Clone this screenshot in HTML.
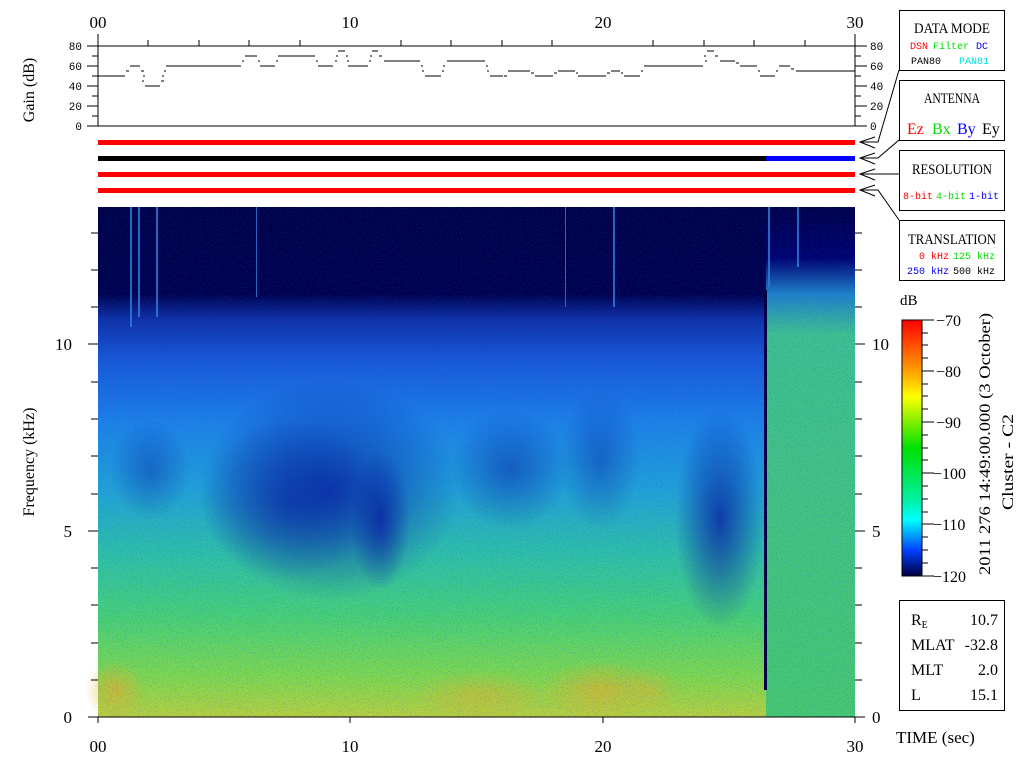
<!DOCTYPE html>
<html><head><style>
body{margin:0;background:#fff;width:1024px;height:768px;overflow:hidden}
svg{display:block}
text{font-family:"Liberation Mono",monospace}
.s{font-family:"Liberation Serif",serif}
</style></head><body>
<svg width="1024" height="768" viewBox="0 0 1024 768" xmlns="http://www.w3.org/2000/svg">
<defs>
<linearGradient id="main" x1="0" y1="207" x2="0" y2="717" gradientUnits="userSpaceOnUse">
<stop offset="0" stop-color="#000048"/>
<stop offset="0.17" stop-color="#00004e"/>
<stop offset="0.22" stop-color="#1030a8"/>
<stop offset="0.3" stop-color="#1a58d8"/>
<stop offset="0.42" stop-color="#1e80e8"/>
<stop offset="0.55" stop-color="#22a0d8"/>
<stop offset="0.68" stop-color="#30c0a8"/>
<stop offset="0.8" stop-color="#48d078"/>
<stop offset="0.92" stop-color="#80d850"/>
<stop offset="1" stop-color="#b8d040"/>
</linearGradient>
<linearGradient id="right" x1="0" y1="207" x2="0" y2="717" gradientUnits="userSpaceOnUse">
<stop offset="0" stop-color="#000048"/>
<stop offset="0.1" stop-color="#000070"/>
<stop offset="0.17" stop-color="#2080c8"/>
<stop offset="0.25" stop-color="#40c090"/>
<stop offset="1" stop-color="#48c870"/>
</linearGradient>
<linearGradient id="cb" x1="0" y1="320" x2="0" y2="576" gradientUnits="userSpaceOnUse">
<stop offset="0" stop-color="#ff0000"/>
<stop offset="0.2" stop-color="#ffa000"/>
<stop offset="0.3" stop-color="#ffff00"/>
<stop offset="0.5" stop-color="#00e000"/>
<stop offset="0.7" stop-color="#00f0a0"/>
<stop offset="0.78" stop-color="#00ffff"/>
<stop offset="0.9" stop-color="#0040ff"/>
<stop offset="1" stop-color="#000040"/>
</linearGradient>
<radialGradient id="dark"><stop offset="0" stop-color="#0820a0" stop-opacity="0.8"/><stop offset="1" stop-color="#0820a0" stop-opacity="0"/></radialGradient>
<radialGradient id="warm"><stop offset="0" stop-color="#e0b030" stop-opacity="0.7"/><stop offset="1" stop-color="#e0b030" stop-opacity="0"/></radialGradient>
<filter id="n" filterUnits="userSpaceOnUse" x="98" y="207" width="757" height="510"><feTurbulence type="fractalNoise" baseFrequency="0.8" numOctaves="1" seed="3"/><feColorMatrix values="0 0 0 0 0  0 0 0 0 0.1  0 0 0 0 0.6  0 0 0 2 -1"/></filter>
</defs>

<g font-size="17" class="s">
<text x="98" y="28" text-anchor="middle" class="s">00</text>
<text x="350" y="28" text-anchor="middle" class="s">10</text>
<text x="603" y="28" text-anchor="middle" class="s">20</text>
<text x="855" y="28" text-anchor="middle" class="s">30</text>
</g>
<g stroke="#000" stroke-width="1" fill="none">
<line x1="98" y1="34" x2="98" y2="126"/><line x1="855" y1="34" x2="855" y2="126"/>
<line x1="87" y1="46" x2="867" y2="46"/><line x1="87" y1="126" x2="867" y2="126"/>
<path d="M148 40V46M199 40V46M249 40V46M300 40V46M401 40V46M451 40V46M502 40V46M552 40V46M653 40V46M704 40V46M754 40V46M805 40V46"/>
<path d="M92 56H98M87 66H98M92 76H98M87 86H98M92 96H98M87 106H98M92 116H98"/>
<path d="M855 56H861M855 66H867M855 76H861M855 86H867M855 96H861M855 106H867M855 116H861"/>
<path d="M98 76H125 M130 66H140 M145 86H160 M166 66H241 M245 56H257 M260 66H275 M278 56H315 M318 66H333 M338 51H345 M348 66H368 M372 51H378 M384 61H420 M425 76H441 M447 61H485 M490 76H503 M508 71H530 M535 76H553 M558 71H575 M578 76H606 M611 71H620 M624 76H640 M644 66H703 M707 51H714 M720 61H735 M740 66H757 M760 76H775 M779 66H790 M796 71H855"/>
<path d="M126 71h3M141 71h3M143 76h2M142 81h2M161 81h3M162 76h2M164 71h2M242 61h2M258 61h2M276 61h2M316 61h2M335 61h2M336 56h2M346 56h2M347 61h2M369 61h2M370 56h2M379 56h3M421 66h2M422 71h2M442 71h2M443 66h2M486 66h2M487 71h2M504 76h3M531 73h3M554 73h3M576 73h2M607 73h3M621 73h2M641 71h2M704 56h2M705 61h2M715 56h3M736 63h3M758 71h2M776 71h2M791 69h3"/>
</g>
<g font-size="11" fill="#000">
<text x="82" y="50" text-anchor="end">80</text><text x="82" y="70" text-anchor="end">60</text><text x="82" y="90" text-anchor="end">40</text><text x="82" y="110" text-anchor="end">20</text><text x="82" y="130" text-anchor="end">0</text>
<text x="870" y="50">80</text><text x="870" y="70">60</text><text x="870" y="90">40</text><text x="870" y="110">20</text><text x="870" y="130">0</text>
</g>
<text class="s" font-size="16" transform="translate(34 90) rotate(-90)" text-anchor="middle">Gain (dB)</text>

<rect x="98" y="140" width="757" height="5" fill="#ff0000"/>
<rect x="98" y="156" width="668" height="5" fill="#000"/>
<rect x="766" y="156" width="89" height="5" fill="#0000ff"/>
<rect x="98" y="172" width="757" height="5" fill="#ff0000"/>
<rect x="98" y="188" width="757" height="5" fill="#ff0000"/>

<g stroke="#000" fill="none">
<path d="M875 137L860 142L875 148M860 142H878L899 70"/>
<path d="M875 153L860 158L875 164M860 158H878L899 140"/>
<path d="M875 169L860 174L875 180M860 174H899"/>
<path d="M875 185L860 190L875 196M860 190H878L899 220"/>
</g>
<g stroke="#000" fill="#fff">
<rect x="899.5" y="10.5" width="105" height="60"/>
<rect x="899.5" y="80.5" width="105" height="60"/>
<rect x="899.5" y="150.5" width="105" height="60"/>
<rect x="899.5" y="220.5" width="105" height="60"/>
<rect x="899.5" y="600.5" width="105" height="110"/>
</g>
<g class="s" font-size="15" text-anchor="middle">
<text x="952" y="33" class="s" textLength="76" lengthAdjust="spacingAndGlyphs">DATA MODE</text>
<text x="952" y="103" class="s" textLength="56" lengthAdjust="spacingAndGlyphs">ANTENNA</text>
<text x="952" y="174" class="s" textLength="80" lengthAdjust="spacingAndGlyphs">RESOLUTION</text>
<text x="952" y="244" class="s" textLength="88" lengthAdjust="spacingAndGlyphs">TRANSLATION</text>
</g>
<g font-size="10">
<text x="910" y="49" fill="#ff0000">DSN</text><text x="933" y="49" fill="#00dd00">Filter</text><text x="976" y="49" fill="#0000ff">DC</text>
<text x="911" y="64" fill="#000">PAN80</text><text x="959" y="64" fill="#00dddd">PAN81</text>
<text x="903" y="199" fill="#ff0000">8-bit</text><text x="936" y="199" fill="#00dd00">4-bit</text><text x="969" y="199" fill="#0000ff">1-bit</text>
<text x="919" y="259" fill="#ff0000">0 kHz</text><text x="953" y="259" fill="#00dd00">125 kHz</text>
<text x="907" y="274" fill="#0000ff">250 kHz</text><text x="953" y="274" fill="#000">500 kHz</text>
</g>
<g class="s" font-size="16">
<text x="907" y="134" fill="#ff0000" class="s">Ez</text><text x="932" y="134" fill="#00dd00" class="s">Bx</text><text x="957" y="134" fill="#0000ff" class="s">By</text><text x="982" y="134" fill="#000" class="s">Ey</text>
</g>

<rect x="98" y="207" width="668" height="510" fill="url(#main)"/>
<ellipse cx="330" cy="490" rx="130" ry="110" fill="url(#dark)"/>
<ellipse cx="290" cy="500" rx="90" ry="80" fill="url(#dark)" opacity="0.7"/>
<ellipse cx="380" cy="520" rx="30" ry="70" fill="url(#dark)"/>
<ellipse cx="720" cy="520" rx="45" ry="110" fill="url(#dark)"/>
<ellipse cx="510" cy="470" rx="60" ry="60" fill="url(#dark)" opacity="0.6"/>
<ellipse cx="600" cy="460" rx="40" ry="70" fill="url(#dark)" opacity="0.5"/>
<ellipse cx="150" cy="470" rx="40" ry="50" fill="url(#dark)" opacity="0.5"/>
<ellipse cx="600" cy="690" rx="60" ry="30" fill="url(#warm)"/>
<ellipse cx="480" cy="695" rx="70" ry="25" fill="url(#warm)" opacity="0.7"/>
<ellipse cx="115" cy="690" rx="30" ry="30" fill="url(#warm)"/>
<ellipse cx="650" cy="690" rx="30" ry="25" fill="url(#warm)" opacity="0.6"/>
<rect x="766" y="207" width="89" height="510" fill="url(#right)"/>
<rect x="764" y="290" width="3" height="400" fill="#000040"/>
<rect x="98" y="207" width="757" height="510" filter="url(#n)" opacity="0.5"/>
<g fill="#3080e0" opacity="0.8">
<rect x="130" y="207" width="2" height="120"/><rect x="138" y="207" width="2" height="110"/><rect x="156" y="207" width="2" height="110"/><rect x="613" y="207" width="2" height="100"/><rect x="768" y="207" width="2" height="80"/><rect x="797" y="207" width="2" height="60"/><rect x="256" y="207" width="1" height="90"/><rect x="565" y="207" width="1" height="100"/>
</g>
<g stroke="#000" fill="none">
<line x1="98" y1="717" x2="855" y2="717"/>
<path d="M98 717V723M350 717V723M603 717V723M855 717V723"/>
<path d="M88 717H98M91 680H98M91 643H98M91 605H98M91 568H98M88 531H98M91 494H98M91 456H98M91 419H98M91 382H98M88 344H98M91 307H98M91 270H98M91 233H98"/>
<path d="M855 717H865M855 680H862M855 643H862M855 605H862M855 568H862M855 531H865M855 494H862M855 456H862M855 419H862M855 382H862M855 344H865M855 307H862M855 270H862M855 233H862"/>
</g>
<g class="s" font-size="17">
<text x="72" y="723" text-anchor="end" class="s">0</text><text x="72" y="537" text-anchor="end" class="s">5</text><text x="72" y="350" text-anchor="end" class="s">10</text>
<text x="872" y="723" class="s">0</text><text x="872" y="537" class="s">5</text><text x="872" y="350" class="s">10</text>
<text x="98" y="752" text-anchor="middle" class="s">00</text><text x="350" y="752" text-anchor="middle" class="s">10</text><text x="603" y="752" text-anchor="middle" class="s">20</text><text x="855" y="752" text-anchor="middle" class="s">30</text>
<text x="896" y="743" class="s">TIME (sec)</text>
</g>
<text class="s" font-size="16" transform="translate(34 462) rotate(-90)" text-anchor="middle">Frequency (kHz)</text>

<text class="s" x="900" y="305" font-size="15">dB</text>
<rect x="902" y="320" width="20" height="256" fill="url(#cb)" stroke="#000"/>
<g stroke="#000"><path d="M922 320H934M922 333H928M922 345H928M922 358H928M922 371H934M922 384H928M922 396H928M922 409H928M922 422H934M922 435H928M922 448H928M922 460H928M922 473H934M922 486H928M922 499H928M922 512H928M922 524H934M922 537H928M922 550H928M922 563H928M922 576H934"/></g>
<g class="s" font-size="16">
<text x="936" y="326" class="s">−70</text><text x="936" y="377" class="s">−80</text><text x="936" y="428" class="s">−90</text><text x="933" y="479" class="s">−100</text><text x="933" y="530" class="s">−110</text><text x="933" y="582" class="s">−120</text>
</g>
<text class="s" font-size="16" transform="translate(990 444) rotate(-90)" text-anchor="middle" textLength="262" lengthAdjust="spacingAndGlyphs">2011 276 14:49:00.000 (3 October)</text>
<text class="s" font-size="16" transform="translate(1013 462) rotate(-90)" text-anchor="middle" textLength="96" lengthAdjust="spacingAndGlyphs">Cluster - C2</text>

<g class="s" font-size="16">
<text x="911" y="625" class="s">R<tspan font-size="10" dy="3">E</tspan></text><text x="998" y="625" text-anchor="end" class="s">10.7</text>
<text x="911" y="650" class="s">MLAT</text><text x="998" y="650" text-anchor="end" class="s">-32.8</text>
<text x="911" y="675" class="s">MLT</text><text x="998" y="675" text-anchor="end" class="s">2.0</text>
<text x="911" y="700" class="s">L</text><text x="998" y="700" text-anchor="end" class="s">15.1</text>
</g>
</svg>
</body></html>
